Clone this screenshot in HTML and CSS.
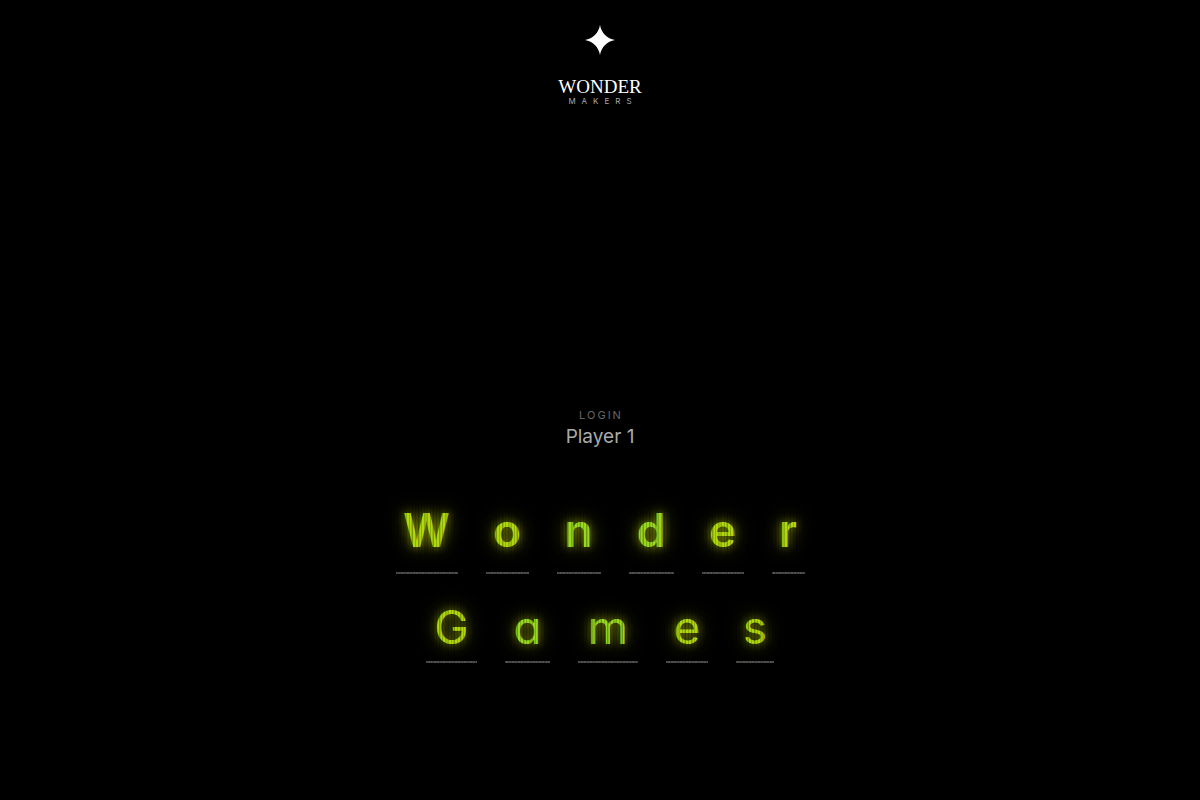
FILE: index.html
```html
<!DOCTYPE html>
<html lang="en">
<head>
    <meta charset="UTF-8">
    <meta name="viewport" content="width=device-width, initial-scale=1.0">
    <title>Wonder Games</title>
    <link rel="stylesheet" href="styles.css">
</head>
<body>
    <header>
        <a class="logo" href="#">
            <svg class="star" viewBox="0 0 30 30" width="30" height="30" aria-hidden="true">
                <path d="M15 0C16.500 8 22 13.800 30 15C22 16.200 16.500 22 15 30C13.500 22 8 16.200 0 15C8 13.800 13.500 8 15 0Z"/>
            </svg>
            <span class="logo-name">WONDER</span>
            <span class="logo-sub">MAKERS</span>
        </a>
    </header>

    <main>
        <a class="login" href="#">
            <span class="login-label">LOGIN</span>
            <span class="player">Player 1</span>
        </a>

        <h1 class="title">
            <span class="word wonder">
                <span class="letter">W</span>
                <span class="letter">o</span>
                <span class="letter mid">n</span>
                <span class="letter mid">d</span>
                <span class="letter">e</span>
                <span class="letter">r</span>
            </span>
            <span class="word games">
                <span class="letter">G</span>
                <span class="letter mid">a</span>
                <span class="letter mid">m</span>
                <span class="letter">e</span>
                <span class="letter">s</span>
            </span>
        </h1>
    </main>
</body>
</html>
```

FILE: styles.css
```css
* {
    box-sizing: border-box;
}

body {
    margin: 0;
    min-height: 100vh;
    display: flex;
    flex-direction: column;
    justify-content: space-between;
    background-color: #000;
    color: #fff;
    font-family: Inter, "Liberation Sans", sans-serif;
}

a {
    color: inherit;
    text-decoration: none;
}

header {
    display: flex;
    justify-content: center;
    padding-top: 25px;
}

.logo {
    display: flex;
    flex-direction: column;
    align-items: center;
}

.star {
    fill: #fff;
    margin-bottom: 24px;
}

.logo-name {
    font-family: "Liberation Serif", serif;
    font-size: 19px;
    line-height: 16px;
}

.logo-sub {
    font-size: 8px;
    line-height: 12px;
    letter-spacing: 6px;
    margin-right: -6px;
    color: #aaa;
}

main {
    display: flex;
    flex-direction: column;
    align-items: center;
    padding-bottom: 137px;
}

.login {
    display: flex;
    flex-direction: column;
    align-items: center;
    margin-bottom: 50px;
}

.login-label {
    font-size: 11px;
    line-height: 17px;
    letter-spacing: 2px;
    margin-right: -2px;
    color: #666;
}

.player {
    font-size: 19px;
    line-height: 26px;
    color: #aaa;
}

.title {
    position: relative;
    margin: 0;
    display: flex;
    flex-direction: column;
    align-items: center;
    font-size: 46px;
    line-height: 60px;
    font-feature-settings: "cv11";
}

/* thin vertical scanlines over both words */
.title::after {
    content: "";
    position: absolute;
    inset: -20px;
    pointer-events: none;
    background:
        repeating-linear-gradient(90deg, rgba(0, 0, 0, 0.2) 0 1px, transparent 1px 3px),
        repeating-linear-gradient(90deg, rgba(0, 0, 0, 0.12) 0 2px, transparent 2px 7px);
}

.word {
    display: grid;
    gap: 28px;
}

.wonder {
    grid-template-columns: 62px 43px 44px 45px 42px 33px;
    font-weight: 600;
    margin-bottom: 23px;
}

.games {
    grid-template-columns: 51px 45px 60px 42px 38px;
    font-weight: 400;
}

.letter {
    text-align: center;
    color: #b0d80c;
    text-shadow: 0 0 8px rgba(150, 165, 0, 0.7), 0 0 18px rgba(150, 165, 0, 0.8);
    border-bottom: 2px solid #505050;
}

.mid {
    color: #98d81e;
}

.wonder .letter {
    padding-bottom: 12px;
}

.games .letter {
    padding-bottom: 4px;
}
```
